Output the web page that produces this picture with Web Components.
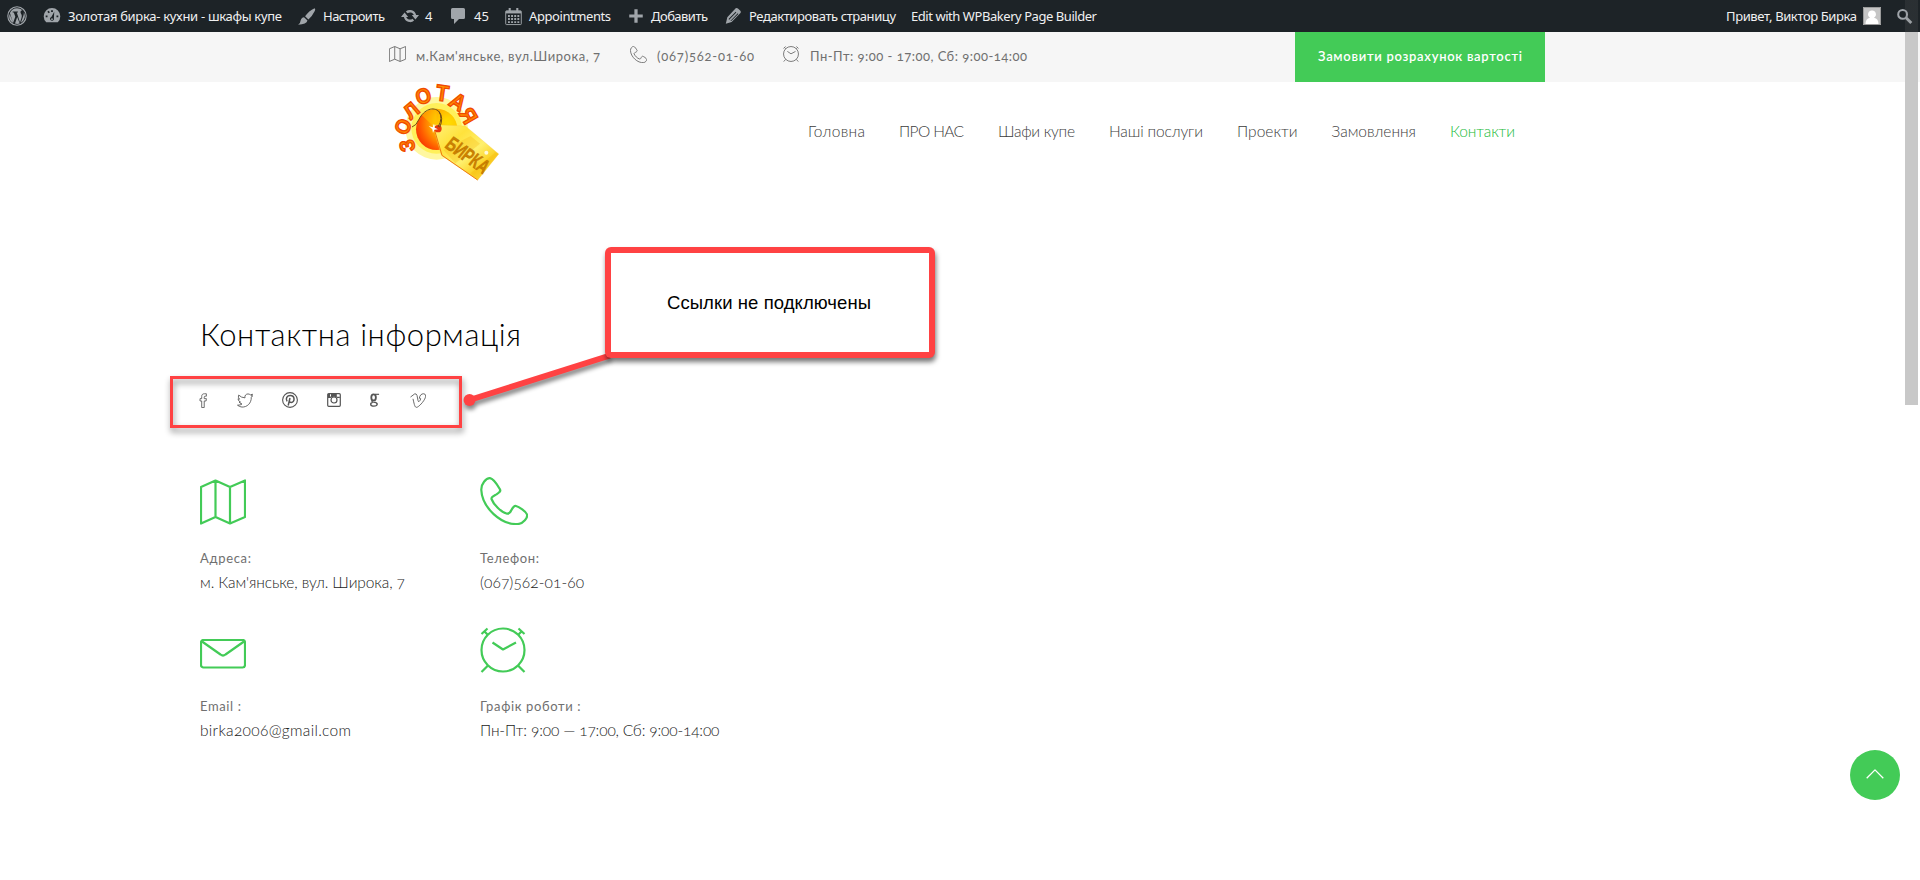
<!DOCTYPE html>
<html lang="uk">
<head>
<meta charset="utf-8">
<title>Контактна інформація</title>
<style>
html,body{margin:0;height:880px;overflow:hidden;background:#fff}
body{font-family:Lato,"Open Sans",sans-serif;position:relative}
</style>
</head>
<body>
<contact-page></contact-page>
<script>
const ICONS = {
  map: ['0 0 46 46','<path d="M1 8 15.5 1.5 30 8 45 1.5V38L30 44.5 15.5 38 1 44.5ZM15.5 1.5V38M30 8V44.5"/>'],
  phone: ['0 0 48 48','<path d="M1.3 13C1 7 6 1 10 1.2c4 .6 7.500 7 10 11.200 1 2-.5 3-3.500 5-3 1.600-5.500 2.500-5 4.600C13.500 27.500 21 35 26.500 36.500c2.500.8 3.500-.5 4.800-3.200C32.500 31 34 28.500 36 29c3 .8 10 5.500 11 8.500 1 3.500-4 9-8 9.300C21 49 2 30 1.300 13Z"/>'],
  mail: ['0 0 46 30','<rect x="1" y="1" width="44" height="27.500" rx="2.500"/><path d="M2 2.500 20.500 15.500Q23 17.500 25.500 15.500L44 2.500"/>'],
  clock: ['0 0 46 46','<circle cx="23" cy="23" r="21.500"/><path d="M12.500 15.500 23 22.500 36 15.500M8 38.500 1.500 45M38 38.500 44.500 45M1.500 7 7.500 1.500M4.500 4.500 8 8M38.500 1.500 44.500 7M41.500 4.500 38 8"/>'],
  up: ['0 0 18 10','<path d="M.7 9.300 9 .9 17.300 9.300"/>'],
  facebook: ['0 0 16 16','<path d="M5 15.500V8.500H3.200V6H5V3.800C5 1.500 6.200.8 8 .8h2V3.400H8.700Q7.700 3.400 7.700 4.400V6H10L9.700 8.500H7.700V15.500Z"/>'],
  twitter: ['0 0 16 16','<path d="M.5 13q3 .1 4.500-1.300Q2.800 11.200 2.200 9.600H3.500Q1 8.500 1 6.200L2.500 6.600Q.6 4.500 1.700 2.200 4.300 5 8 5.200C7.400 2.500 9.200 1 11 1q1.400 0 2.300 1L15.500 1.300 14.500 3.200 15.700 3 14.300 4.500C14.500 11 10 15.200 5 15Q2.500 14.800.5 13Z"/>'],
  pinterest: ['0 0 16 16','<circle cx="8" cy="8" r="7.400"/><path stroke-width="1.500" d="M6.200 13.500 8 6M5.100 9.300C3.200 6.300 5 3.500 8.300 3.500c5 0 4.600 7 1 7Q7.600 10.500 7.200 9.200"/>'],
  instagram: ['0 0 14 14','<rect x=".7" y=".7" width="12.600" height="12.600" rx="1"/><path fill="currentColor" stroke="none" d="M1 1H3V5H1ZM4 1H9.800V3.800H12.800V5H10.300Q7 2.500 3.700 5H1V3.500H4Z"/><circle cx="7" cy="7" r="3"/>'],
  google: ['0 0 12 16','<ellipse cx="5" cy="5" rx="2.500" ry="3.500" stroke-width="2"/><path stroke-width="1.300" d="M6.500 1.500H11"/><path stroke-width="1.500" d="M3.800 8.300Q2.200 10 5 10.400C10.700 11 9.700 15 5.300 15 1 15 1 11.600 4 10.800"/>'],
  vimeo: ['0 0 16 16','<path d="M.5 4.300 4.600 1q1.700-.7 2.400 1.500L8 8Q8.400 9.500 9 9.200 10.500 7.700 10.700 6.200 10.500 5.200 9.300 5.600C9.800 2.300 11.500.8 13.500.8 16 1 15.800 3 15.300 5 14 9 8.500 15.300 6.500 15.300 5 15.300 4.500 13.500 3 6.200 2.900 5 2.200 5.300L1.200 5.700Z"/>'],
  wordpress: ['0 0 20 20','<circle cx="10" cy="10" r="9.200" stroke-width="1.100"/><path fill="currentColor" stroke="none" d="M10 2.200c2.100 0 4 .8 5.400 2.100-1.200 0-1.900.9-1.900 1.900 0 1.100 1.300 2 1.300 3.800 0 .8-.3 1.900-.8 3.400l-1 3L9.800 6.500l1.100-.1V5.600H5.700v.8l1.100.1 1.500 4.200-2.200 6L2.900 6.900A7.800 7.800 0 0 1 10 2.200ZM2.600 8 6.200 17A7.800 7.800 0 0 1 2.600 8ZM10.200 11l2.500 6.500a8 8 0 0 1-4.700.1ZM16.800 6.200a7.800 7.800 0 0 1-2.900 10.600l2.400-6.800Q17 8 16.800 6.200Z"/>'],
  dash: ['0 0 20 20','<path fill="currentColor" stroke="none" fill-rule="evenodd" d="M3.600 17A9.200 9.200 0 1 1 16.400 17ZM9 3.500v2h2v-2ZM4.800 5.300 6.300 7 7.700 5.700 6.200 4.200ZM3 9.500v2h2v-2ZM15 9.500v2h2v-2ZM12.500 5.200 9.300 11a2.200 2.200 0 1 0 2.800 1.500ZM10 12.500a1 1 0 1 1 0 2 1 1 0 0 1 0-2Z"/>'],
  brush: ['0 0 20 20','<path fill="currentColor" stroke="none" d="M18.500 1.200q1.300.8.2 3-2.500 5.200-6.700 9l-3.500-3.400Q12.500 4 18.500 1.200ZM7.400 10.800l3.600 3.500q-.8 4.200-9.800 4.400 2.500-1.700 2.600-4.500.8-3.200 3.600-3.400Z"/>'],
  update: ['0 0 20 20','<g fill="currentColor" stroke="none"><path d="M10.200 3.300c2.700 0 5 1.600 6 3.900l.6 1.800H20L16 14l-4-5h2.300A4.500 4.500 0 0 0 7.300 7L5.400 4.900A6.800 6.800 0 0 1 10.200 3.300Z"/><path d="M9.800 16.800c-2.700 0-5-1.600-6-3.900L3.200 11H0L4 6l4 5H5.700a4.500 4.500 0 0 0 7 2l1.900 2.100A6.800 6.800 0 0 1 9.800 16.800Z"/></g>'],
  comment: ['0 0 20 20','<path fill="currentColor" stroke="none" d="M4.500 2h11Q17 2 17 3.500v8Q17 13 15.500 13H11L6 18V13H4.500Q3 13 3 11.500v-8Q3 2 4.500 2Z"/>'],
  calendar: ['0 0 20 20','<rect x="1.800" y="4" width="16.400" height="14.500" rx=".8"/><path stroke-width="2.500" d="M2 5.500H18"/><path stroke-width="2.200" d="M6 1V5M14 1V5"/><path stroke-width="2" stroke-dasharray="2 1.300" d="M4.200 9.500H16.500M4.200 12.700H16.500M4.200 15.900H16.500"/>'],
  plus: ['0 0 20 20','<path stroke-width="3.600" d="M10 2.500V17.500M2.500 10H17.500"/>'],
  pencil: ['0 0 20 20','<path fill="currentColor" stroke="none" fill-rule="evenodd" d="M13 1.500q1.200-.9 2.500.2l2.700 2.600q1.100 1.300.1 2.500L8.500 16.600 2 18.500 3.700 11.500ZM5.300 13l.2 1.500 8.200-8.300-.7-.8ZM7 15.500l1 .1L16 7.700l-.7-.7Z"/>'],
  search: ['0 0 20 20','<circle cx="7.800" cy="7.500" r="5.200" stroke-width="2.400"/><path stroke-width="3.400" d="M11.800 11.500 18 17.700"/>'],
  avatar: ['0 0 18 18','<path fill="#c5c5c5" stroke="none" d="M0 0H18V18H0Z"/><path fill="#fff" stroke="none" d="M9 3.600a3.800 3.800 0 0 1 2 7.100q4.500 1 4.500 6.300H2.500Q2.500 11.700 7 10.700A3.800 3.800 0 0 1 9 3.600Z"/><rect x=".5" y=".5" width="17" height="17" stroke="#9b9b9b" stroke-width="1"/>']
};

customElements.define('line-icon', class extends HTMLElement {
  connectedCallback(){
    const [box, art] = ICONS[this.getAttribute('name')];
    const w = this.getAttribute('w'), h = this.getAttribute('h') || w;
    this.attachShadow({mode:'open'}).innerHTML =
      `<style>:host{display:block;flex:none;width:${w}px;height:${h}px}svg{display:block}</style>
      <svg width="${w}" height="${h}" viewBox="${box}" preserveAspectRatio="none" fill="none" stroke="currentColor" stroke-width="${this.getAttribute('sw')||1}" stroke-linejoin="round">${art}</svg>`;
  }
});

/* Text tracked so that it fills the width given in "w". */
customElements.define('fit-text', class extends HTMLElement {
  connectedCallback(){
    const root = this.attachShadow({mode:'open'}), w = +this.getAttribute('w');
    root.innerHTML = `<style>:host{display:block;flex:none;width:${w}px;white-space:pre}span{display:inline-block}</style><span><slot></slot></span>`;
    const s = root.querySelector('span'), n = this.textContent.length;
    s.style.letterSpacing = ((w - s.getBoundingClientRect().width) / Math.max(1, n - 1)).toFixed(3) + 'px';
  }
});

customElements.define('admin-bar', class extends HTMLElement {
  connectedCallback(){
    this.attachShadow({mode:'open'}).innerHTML = `<style>
      :host{display:flex;align-items:center;height:32px;box-sizing:border-box;padding:0 7px;background:#1d2327;color:#f0f0f1;font:13px/32px "Noto Sans","Open Sans",sans-serif}
      line-icon{color:#a0a5aa}.end{margin-left:auto;display:flex;align-items:center}
      </style>
      <line-icon name="wordpress" w="20"></line-icon>
      <line-icon name="dash" w="18" style="margin-left:16px"></line-icon><fit-text w="214" style="margin-left:7px">Золотая бирка- кухни - шкафы купе</fit-text>
      <line-icon name="brush" w="19" style="margin-left:15px"></line-icon><fit-text w="62" style="margin-left:7px">Настроить</fit-text>
      <line-icon name="update" w="18" style="margin-left:16px"></line-icon><fit-text w="7" style="margin-left:6px">4</fit-text>
      <line-icon name="comment" w="20" style="margin-left:16px"></line-icon><fit-text w="15" style="margin-left:6px">45</fit-text>
      <line-icon name="calendar" w="19" style="margin-left:15px"></line-icon><fit-text w="82" style="margin-left:6px">Appointments</fit-text>
      <line-icon name="plus" w="18" style="margin-left:16px"></line-icon><fit-text w="57" style="margin-left:6px">Добавить</fit-text>
      <line-icon name="pencil" w="18" style="margin-left:16px"></line-icon><fit-text w="147" style="margin-left:7px">Редактировать страницу</fit-text>
      <fit-text w="186" style="margin-left:15px">Edit with WPBakery Page Builder</fit-text>
      <div class="end"><fit-text w="131">Привет, Виктор Бирка</fit-text><line-icon name="avatar" w="18" style="margin-left:6px"></line-icon><line-icon name="search" w="17" style="margin-left:15px"></line-icon></div>`;
  }
});

customElements.define('top-strip', class extends HTMLElement {
  connectedCallback(){
    this.attachShadow({mode:'open'}).innerHTML = `<style>
      :host{display:flex;height:50px;box-sizing:border-box;padding-left:389px;background:#f6f6f6;color:#707070;font-size:13px;line-height:49px}
      line-icon{margin-top:14px}.b{margin-left:268px;width:250px;background:#43cb57;color:#fff;font-weight:600;display:flex;justify-content:center}
      </style>
      <line-icon name="map" w="17" h="16" sw="2.600"></line-icon><fit-text w="184" style="margin-left:10px">м.Кам'янське, вул.Широка, 7</fit-text>
      <line-icon name="phone" w="17" sw="2.600" style="margin-left:30px"></line-icon><fit-text w="97" style="margin-left:10px">(067)562-01-60</fit-text>
      <line-icon name="clock" w="16" sw="2.600" style="margin-left:29px"></line-icon><fit-text w="217" style="margin-left:11px">Пн-Пт: 9:00 - 17:00, Сб: 9:00-14:00</fit-text>
      <div class="b"><fit-text w="204">Замовити розрахунок вартості</fit-text></div>`;
  }
});

customElements.define('tag-logo', class extends HTMLElement {
  connectedCallback(){
    const ring = [['З',81,209,-100,62],['О',69,152,-66,62],['Л',94,103,-40,62],['О',130,60,-16,64],['Т',187,51,8,68],['А',234,77,32,68],['Я',266,119,60,66]]
      .map(([c,x,y,r,s]) => `<text transform="translate(${x} ${y}) rotate(${r}) scale(.92 1)" y="${s*.35}" font-size="${s}" text-anchor="middle">${c}</text>`).join('');
    this.attachShadow({mode:'open'}).innerHTML = `<style>:host{display:block;width:130px;height:110px;margin-top:-6px}svg{display:block}</style>
    <svg width="130" height="116" viewBox="0 0 390 348">
      <defs><radialGradient id="s" cx=".78" cy=".35" r=".9"><stop offset="0" stop-color="#ffe600"/><stop offset=".4" stop-color="#ffb400"/><stop offset=".75" stop-color="#ff5a00"/><stop offset="1" stop-color="#f22800"/></radialGradient>
      <linearGradient id="t" x1="0" y1="0" x2="1" y2="1"><stop offset="0" stop-color="#fff27a"/><stop offset=".3" stop-color="#ffe23c"/><stop offset=".55" stop-color="#fff06e"/><stop offset=".75" stop-color="#fbd022"/><stop offset="1" stop-color="#fff36b"/></linearGradient>
      <linearGradient id="l" x1="0" y1="0" x2="0" y2="1"><stop offset="0" stop-color="#ffa800"/><stop offset=".5" stop-color="#ff7a00"/><stop offset="1" stop-color="#ffa800"/></linearGradient></defs>
      <circle cx="170" cy="157" r="94" fill="#fff7a0"/><circle cx="170" cy="157" r="76" fill="#fff05a"/>
      <circle cx="170" cy="160" r="62" fill="url(#s)"/><path d="M170 160 124 116Q143 98 170 98ZM170 160 216 118Q232 137 232 160Z" fill="#ffd000" opacity=".45"/>
      <path d="M158 146 256 150 356 234 293 312 184 238Z" fill="url(#t)" stroke="#f6c843" stroke-width="1"/>
      <path d="M160 150 186 238 293 312" fill="none" stroke="#f07a10" stroke-width="3"/>
      <path d="M190 222 272 180 300 203 226 262ZM272 291 346 229 356 234 293 312Z" fill="#f5b60c" opacity=".3"/>
      <circle cx="174" cy="158" r="11" fill="#e9390a"/>
      <path d="M174 153Q190 126 177 107C161 90 132 100 117 130Q109 149 96 153M179 154Q192 126 177 106" fill="none" stroke="#704b16" stroke-width="3"/>
      <path d="m146 150 12 4 4-11 2 12 10 5-11 1-4 10-2-11Z" fill="#fff"/><circle cx="319" cy="230" r="6" fill="#fff" opacity=".8"/>
      <g font-family="Liberation Sans,sans-serif" font-weight="700">
      <g fill="url(#l)" stroke="#f04a00" stroke-width="4">${ring}</g>
      <text transform="translate(191 213) rotate(35) skewX(-4)" font-size="62" textLength="144" lengthAdjust="spacingAndGlyphs" fill="#cc8200" stroke="#ad6400" stroke-width="1">БИРКА</text></g>
    </svg>`;
  }
});

customElements.define('site-header', class extends HTMLElement {
  connectedCallback(){
    this.attachShadow({mode:'open'}).innerHTML = `<style>
      :host{display:flex;height:110px;padding-left:380px;color:#3c3c3c}
      nav{display:flex;gap:34px;margin-left:298px;font-size:15.500px;font-weight:300;line-height:99px}.on{color:#22bb3a}
      </style><tag-logo></tag-logo><nav><fit-text w="57">Головна</fit-text><fit-text w="65">ПРО НАС</fit-text><fit-text w="77">Шафи купе</fit-text><fit-text w="94">Наші послуги</fit-text><fit-text w="60.500">Проекти</fit-text><fit-text w="84.500">Замовлення</fit-text><fit-text class="on" w="65">Контакти</fit-text></nav>`;
  }
});

customElements.define('social-links', class extends HTMLElement {
  connectedCallback(){
    this.attachShadow({mode:'open'}).innerHTML = `<style>:host{display:flex;align-items:center;height:18px;color:#555}</style>
      <line-icon name="facebook" w="15" h="15" sw=".9" style="margin-left:-3px"></line-icon>
      <line-icon name="twitter" w="16" h="15" sw=".9" style="margin-left:25px"></line-icon>
      <line-icon name="pinterest" w="16" sw="1.100" style="margin-left:29px"></line-icon>
      <line-icon name="instagram" w="14" sw="1.200" style="margin-left:29px"></line-icon>
      <line-icon name="google" w="11" h="14" style="margin-left:28px"></line-icon>
      <line-icon name="vimeo" w="16" h="15" sw=".9" style="margin-left:30px"></line-icon>`;
  }
});

customElements.define('contact-card', class extends HTMLElement {
  connectedCallback(){
    const a = n => this.getAttribute(n);
    this.attachShadow({mode:'open'}).innerHTML = `<style>
      :host{display:flex;flex-direction:column;height:148px;color:#222}
      .i{height:48px;display:flex;align-items:flex-end;color:#43cb57}
      .k{font-size:13px;line-height:20px;margin-top:23px;color:#707070}.v{font-size:15.500px;font-weight:300;line-height:24px;margin-top:2px}
      </style><div class="i"><line-icon name="${a('icon')}" w="${a('iw')}" h="${a('ih')}" sw="2.200" style="margin-bottom:${a('lift')||0}px"></line-icon></div>
      <fit-text class="k" w="${a('kw')}">${a('label')}</fit-text><fit-text class="v" w="${a('vw')}">${a('value')}</fit-text>`;
  }
});

customElements.define('note-callout', class extends HTMLElement {
  connectedCallback(){
    this.attachShadow({mode:'open'}).innerHTML = `<style>
      :host{position:absolute;inset:0;pointer-events:none}
      .frame{position:absolute;left:170px;top:376px;width:286px;height:46px;border:3px solid #ff4243;filter:drop-shadow(1px 4px 3px #0007)}
      svg{position:absolute;left:450px;top:340px;filter:drop-shadow(1px 4px 2px #0007)}
      .box{position:absolute;left:605px;top:247px;width:330px;height:111px;border-radius:6px;background:#ff4243;box-shadow:1px 4px 5px #0008}
      .in{position:absolute;inset:6px;background:#fff;display:flex;justify-content:center;font:18.500px/100px "Liberation Sans",Arial,sans-serif;color:#000}
      .in fit-text{margin-right:2px}
      </style><div class="frame"></div>
      <svg width="170" height="80" fill="none"><path d="M19.500 60 160 15.500" stroke="#ff4243" stroke-width="6"/><circle cx="19.500" cy="60" r="6" fill="#ff4243"/></svg>
      <div class="box"><div class="in"><fit-text w="204">${this.textContent}</fit-text></div></div>`;
  }
});

customElements.define('contact-page', class extends HTMLElement {
  connectedCallback(){
    this.attachShadow({mode:'open'}).innerHTML = `<style>
      :host{display:block;height:880px;position:relative;overflow:hidden;background:#fff;font-variant-numeric:oldstyle-nums}
      main{padding:122px 0 0 200px}
      h1{margin:0;font-size:31px;font-weight:300;line-height:40px;color:#000}
      social-links{margin-top:37px}
      .grid{display:grid;grid-template-columns:280px 300px;margin-top:68px}
      .up{position:absolute;left:1850px;top:750px;width:50px;height:50px;border-radius:50%;background:#43cb57;color:#fff;display:grid;place-items:center}
      .scroll{position:absolute;left:1905px;top:0;width:13px;height:405px;background:linear-gradient(#80808022 32px,#c8c8c8 32px)}
      </style>
      <admin-bar></admin-bar><top-strip></top-strip><site-header></site-header>
      <main><h1><fit-text w="321">Контактна інформація</fit-text></h1><social-links></social-links>
      <div class="grid">
      <contact-card icon="map" iw="46" ih="46" label="Адреса:" kw="51" value="м. Кам'янське, вул. Широка, 7" vw="205"></contact-card>
      <contact-card icon="phone" iw="48" ih="48" label="Телефон:" kw="59" value="(067)562-01-60" vw="104"></contact-card>
      <contact-card icon="mail" iw="46" ih="30" lift="4" label="Email :" kw="41" value="birka2006@gmail.com" vw="151"></contact-card>
      <contact-card icon="clock" iw="46" ih="46" label="Графік роботи :" kw="100.500" value="Пн-Пт: 9:00 — 17:00, Сб: 9:00-14:00" vw="239.500"></contact-card>
      </div></main>
      <div class="up"><line-icon name="up" w="18" h="10" sw="1.300" style="margin-top:-3px"></line-icon></div>
      <div class="scroll"></div>
      <note-callout>Ссылки не подключены</note-callout>`;
  }
});
</script>
</body>
</html>
